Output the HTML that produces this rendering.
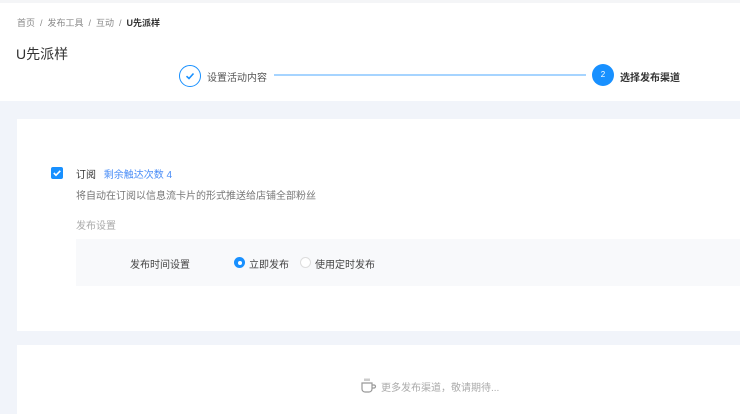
<!DOCTYPE html>
<html><head><meta charset="utf-8"><style>
*{margin:0;padding:0;box-sizing:border-box}
body{width:740px;height:414px;overflow:hidden;background:#f1f4fa;font-family:"Liberation Sans","Noto Sans CJK SC",sans-serif;position:relative}
.a{position:absolute;white-space:nowrap}
</style></head><body>
<div class="a" style="left:0;top:0;width:740px;height:3px;background:#f4f5f7"></div>
<div class="a" style="left:0;top:3px;width:740px;height:98px;background:#fff"></div>
<div class="a" style="left:17px;top:16px;font-size:9px;color:#888">首页 &nbsp;/&nbsp; 发布工具 &nbsp;/&nbsp; 互动 &nbsp;/&nbsp; <b style="color:#333">U先派样</b></div>
<div class="a" style="left:16px;top:44px;font-size:14px;color:#333">U先派样</div>
<div class="a" style="left:179px;top:65px;width:22px;height:22px;border:1.5px solid #1890ff;border-radius:50%"></div>
<svg class="a" style="left:184px;top:70px" width="12" height="12" viewBox="0 0 12 12"><path d="M2.5 6.2 L5 8.5 L9.5 3.5" fill="none" stroke="#1890ff" stroke-width="1.6"/></svg>
<div class="a" style="left:207px;top:69px;font-size:10px;color:#555">设置活动内容</div>
<div class="a" style="left:274px;top:74px;width:312px;height:1.5px;background:#a6d4ff"></div>
<div class="a" style="left:592px;top:64px;width:22px;height:22px;background:#1890ff;border-radius:50%;color:#fff;font-size:8px;text-align:center;line-height:22px">2</div>
<div class="a" style="left:620px;top:69px;font-size:10px;color:#333;font-weight:bold">选择发布渠道</div>
<div class="a" style="left:17px;top:119px;width:723px;height:212px;background:#fff"></div>
<div class="a" style="left:51px;top:167px;width:12px;height:12px;background:#1890ff;border-radius:2px"></div>
<svg class="a" style="left:51px;top:167px" width="12" height="12" viewBox="0 0 12 12"><path d="M2.8 6 L5 8.2 L9.3 3.8" fill="none" stroke="#fff" stroke-width="1.6"/></svg>
<div class="a" style="left:76px;top:166px;font-size:10px;color:#333">订阅 <span style="color:#4b8ef7;margin-left:5px">剩余触达次数 4</span></div>
<div class="a" style="left:76px;top:187px;font-size:10px;color:#777">将自动在订阅以信息流卡片的形式推送给店铺全部粉丝</div>
<div class="a" style="left:76px;top:217px;font-size:10px;color:#aaa">发布设置</div>
<div class="a" style="left:76px;top:239px;width:664px;height:47px;background:#f8f9fb"></div>
<div class="a" style="left:130px;top:256px;font-size:10px;color:#444">发布时间设置</div>
<div class="a" style="left:234px;top:257px;width:11px;height:11px;border-radius:50%;background:#1890ff"></div>
<div class="a" style="left:237.5px;top:260.5px;width:4px;height:4px;border-radius:50%;background:#fff"></div>
<div class="a" style="left:249px;top:256px;font-size:10px;color:#444">立即发布</div>
<div class="a" style="left:300px;top:257px;width:11px;height:11px;border-radius:50%;border:1px solid #ddd;background:#fff"></div>
<div class="a" style="left:315px;top:256px;font-size:10px;color:#444">使用定时发布</div>
<div class="a" style="left:17px;top:345px;width:723px;height:69px;background:#fff"></div>
<svg class="a" style="left:359px;top:377px" width="20" height="17" viewBox="0 0 20 17"><path d="M3 6 H13 V12 A3 3 0 0 1 10 15 H6 A3 3 0 0 1 3 12 Z M13 8 H15 A1.5 1.5 0 0 1 15 11 H13" fill="none" stroke="#999" stroke-width="1.2"/><path d="M6 1.5V4 M8 1.5V4 M10 1.5V4" stroke="#999" stroke-width="1"/></svg>
<div class="a" style="left:381px;top:379px;font-size:10px;color:#aaa">更多发布渠道，敬请期待...</div>
</body></html>
